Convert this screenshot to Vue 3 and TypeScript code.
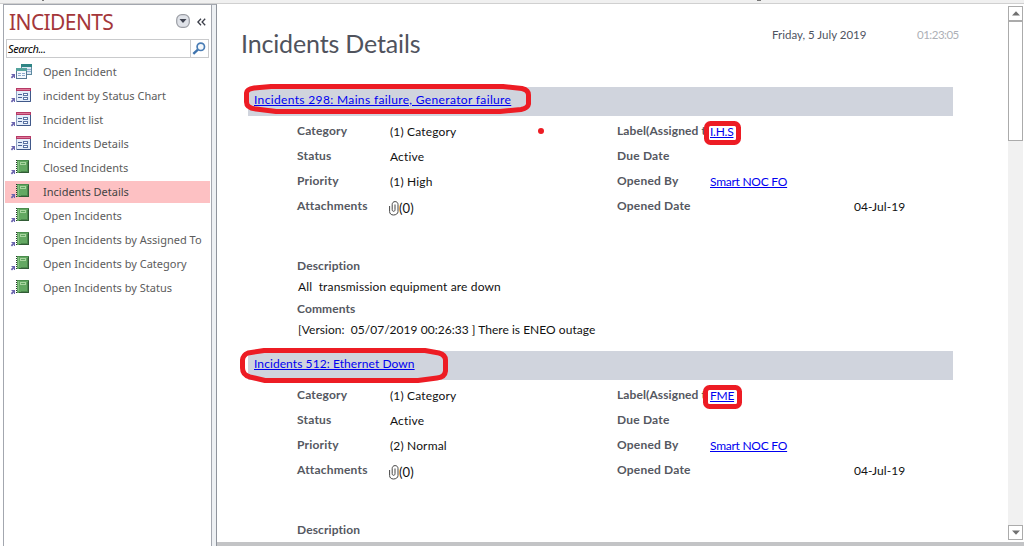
<script setup lang="ts">
type IconKind = 'table' | 'form' | 'report'

interface NavItem {
  label: string
  icon: IconKind
  active?: boolean
}

interface Incident {
  title: string
  kind: string
  priority: string
  assigned: string
  description?: string
  comments?: string
}

const navItems: NavItem[] = [
  { label: 'Open Incident', icon: 'table' },
  { label: 'incident by Status Chart', icon: 'form' },
  { label: 'Incident list', icon: 'form' },
  { label: 'Incidents Details', icon: 'form' },
  { label: 'Closed Incidents', icon: 'report' },
  { label: 'Incidents Details', icon: 'report', active: true },
  { label: 'Open Incidents', icon: 'report' },
  { label: 'Open Incidents by Assigned To', icon: 'report' },
  { label: 'Open Incidents by Category', icon: 'report' },
  { label: 'Open Incidents by Status', icon: 'report' },
]

const incidents: Incident[] = [
  {
    title: 'Incidents 298: Mains failure, Generator failure',
    kind: 'mains',
    priority: '(1) High',
    assigned: 'I.H.S',
    description: 'All  transmission equipment are down',
    comments: '[Version:  05/07/2019 00:26:33 ] There is ENEO outage',
  },
  {
    title: 'Incidents 512: Ethernet Down',
    kind: 'ethernet',
    priority: '(2) Normal',
    assigned: 'FME',
  },
]
</script>

<template>
  <div class="window">
    <div class="ribbon-edge"><i class="speck left"></i><i class="speck right"></i></div>
    <div class="workspace">
      <aside class="nav">
        <header class="nav-head">
          <h1>INCIDENTS</h1>
          <svg class="menu-btn" width="14" height="14" viewBox="0 0 14 14">
            <rect x=".7" y=".7" width="12.6" height="12.6" rx="5" fill="#dfe2e8" stroke="#9a9da4" stroke-width="1.2" />
            <path d="M3.5 5h7L7 9z" fill="#3f4350" />
          </svg>
          <svg class="collapse" width="9" height="8" viewBox="0 0 9 8">
            <path d="M4 .7.9 4 4 7.3M8.2.7 5.1 4l3.1 3.3" fill="none" stroke="#3c3f4a" stroke-width="1.3" />
          </svg>
        </header>
        <div class="search">
          <span>Search...</span>
          <div class="search-btn">
            <svg width="14" height="13" viewBox="0 0 14 13">
              <circle cx="8.8" cy="4.8" r="3.7" fill="#f4f8fc" stroke="#4a7db5" stroke-width="1.7" />
              <path d="M5.9 7.6 1.3 11.8" stroke="#3f74ae" stroke-width="2.4" />
            </svg>
          </div>
        </div>
        <ul>
          <li v-for="(item, i) in navItems" :key="i" :class="{ active: item.active }">
            <svg class="item-icon" width="22" height="17" viewBox="0 0 22 17">
              <path d="M1.500 11H5v4H4v-1.500L2 15.500.8 14.300 2.800 12H1.500z" fill="#6a64ae" />
              <g v-if="item.icon === 'table'">
                <rect x="11.500" y="1.500" width="10" height="10" fill="#dce8f3" stroke="#5f8ba0" />
                <path d="M11 1h11v3H11z" fill="#2f8585" />
                <path d="M17 6.500h4M17 8.500h4" stroke="#8fadd0" />
                <rect x="6.500" y="5.500" width="10" height="10" fill="#f4f8fc" stroke="#577794" />
                <path d="M6 5h11v3H6z" fill="#55a39d" />
                <path d="M8 10.500h3M12 10.500h3M8 12.500h3M12 12.500h3" stroke="#8fa9cd" />
              </g>
              <g v-else-if="item.icon === 'form'">
                <rect x="6.500" y="1.500" width="14" height="13" fill="#e4edfa" stroke="#8fa2c2" />
                <path d="M20.500 4v10.500H7" fill="none" stroke="#405889" />
                <path d="M6 1h15v3H6z" fill="#b63a66" />
                <path d="M7 2.500h13" stroke="#df7a9b" />
                <path d="M8 7.500h4M8 10.500h4" stroke="#4a6294" />
                <rect x="13.500" y="6.500" width="4" height="2" fill="#fff" stroke="#5a73a3" />
                <rect x="13.500" y="10.500" width="4" height="2" fill="#fff" stroke="#5a73a3" />
              </g>
              <g v-else>
                <path d="M7 1h12v13H7z" fill="#63a862" />
                <path d="M7 1h12v1H7z" fill="#4b8d4d" />
                <path d="M17 3h1v10h-7v-1h6z" fill="#4b874c" />
                <path d="M18 2h1v12H9v-1h9z" fill="#315c36" />
                <path d="M8 2h1v10H8z" fill="#86c083" />
                <rect x="10.500" y="3.500" width="5" height="2" fill="#5fa45f" stroke="#a9d5a0" />
                <path d="M6.500 1v13" stroke="#26352b" stroke-width="1" stroke-dasharray="1 1" />
              </g>
            </svg>
            <span>{{ item.label }}</span>
          </li>
        </ul>
      </aside>
      <div class="splitter"></div>
      <main>
        <section class="report">
          <header class="report-head">
            <h2>Incidents Details</h2>
            <span class="date">Friday, 5 July 2019</span>
            <span class="time">01:23:05</span>
          </header>
          <article v-for="inc in incidents" :key="inc.title">
            <div class="band"><a :class="inc.kind">{{ inc.title }}</a></div>
            <div class="fields">
              <b>Category</b><span>(1) Category</span>
              <b class="clip">Label(Assigned to)</b><a>{{ inc.assigned }}</a>
              <b>Status</b><span>Active</span>
              <b>Due Date</b><span></span>
              <b>Priority</b><span>{{ inc.priority }}</span>
              <b>Opened By</b><a>Smart NOC FO</a>
              <b>Attachments</b>
              <span class="attach">
                <svg width="10" height="15" viewBox="0 0 10 15">
                  <path d="M.6 5v5.500C.6 12.600 2 14 4.500 14S9 12.600 9 10.500V3.600C9 1.800 7.900.6 6.100.6S3.200 1.800 3.200 3.600v5.100c0 1 .5 1.600 1.400 1.600S6 9.700 6 8.700V3.500" fill="none" stroke="#454545" stroke-width="1" />
                </svg>(0)
              </span>
              <b>Opened Date</b><span class="opened">04-Jul-19</span>
            </div>
            <div class="notes">
              <b>Description</b>
              <p v-if="inc.description">{{ inc.description }}</p>
              <b v-if="inc.comments">Comments</b>
              <p v-if="inc.comments" class="version">{{ inc.comments }}</p>
            </div>
          </article>
        </section>
        <div class="scrollbar">
          <div class="arrow"><svg width="8" height="5" viewBox="0 0 8 5"><path d="M0 4.500 4 .3l4 4.200z" fill="#707070" /></svg></div>
          <div class="thumb"></div>
          <div class="arrow down"><svg width="8" height="5" viewBox="0 0 8 5"><path d="M0 .5h8L4 4.700z" fill="#707070" /></svg></div>
        </div>
      </main>
    </div>
    <svg class="marks" width="1024" height="546" viewBox="0 0 1024 546">
      <g fill="none" stroke="#ed1c24" stroke-width="5" stroke-linejoin="round">
        <path d="M254 88 271 86.500H503L522 88.500Q528.500 90 528.500 95V104Q528 108 521 109.500L500 111.500H276L256 109Q246.500 108 246.500 102V93Q247 89 254 88Z" />
        <path d="M248 353 264 350.500H425L439 353Q445.500 355 445.500 360V371Q445 377 437 378L418 380.500H265L250 377Q242.500 375 242.500 368V360Q243 355 248 353Z" />
        <rect x="706.500" y="123.500" width="32" height="19" rx="4" />
        <rect x="705.500" y="387.500" width="34" height="19" rx="4" />
      </g>
      <circle cx="541" cy="131" r="3" fill="#ed1c24" />
    </svg>
  </div>
</template>

<style>
html, body { margin: 0; overflow: hidden; }
</style>

<style scoped>
* { box-sizing: border-box; }
.window { position: relative; width: 1024px; height: 546px; overflow: hidden; display: flex; flex-direction: column; background: #fff; font-family: Lato, "Liberation Sans", sans-serif; font-size: 12px; color: #111; }
.ribbon-edge { position: relative; height: 4px; flex: none; background: #f0f0f0; border-bottom: 1px solid #d0d0d0; }
.speck { position: absolute; top: 0; height: 1px; background: #777; }
.speck.left { left: 42px; width: 2px; }
.speck.right { left: 757px; width: 4px; }
.workspace { flex: 1; display: flex; min-height: 0; padding-left: 3px; }
.nav { width: 209px; flex: none; border: solid #a3a7af; border-width: 1px 1px 0; font-family: "Noto Sans", "Open Sans", sans-serif; }
.nav-head { height: 34px; display: flex; align-items: flex-start; padding: 2px 5px 0 5px; }
h1 { margin: 0; width: 167px; font-size: 21px; line-height: 31px; font-weight: 400; color: #a4373a; letter-spacing: -.6px; }
.menu-btn { margin-top: 7px; }
.collapse { margin: 11px 0 0 7px; }
.search { height: 19px; margin: 0 2px; border: 1px solid #c9cacc; display: flex; font-style: italic; font-size: 11px; line-height: 17px; color: #000; letter-spacing: -.4px; }
.search span { flex: 1; padding-left: 1px; }
.search-btn { width: 18px; border-left: 1px solid #c9cacc; display: flex; padding: 2px 0 0 1px; }
ul { list-style: none; margin: 3px 0 0; padding: 0 1px; }
li { height: 22px; margin-bottom: 2px; display: flex; align-items: center; font-size: 11px; color: #5c5c5c; white-space: pre; padding-left: 5px; letter-spacing: 0; }
li.active { background: #fdc1c3; color: #444; }
li span { line-height: 16px; }
.item-icon { margin-right: 11px; margin-top: -1px; flex: none; }
.splitter { width: 5px; flex: none; background: #edf0f3; border-top: 1px solid #a3a7af; border-right: 1px solid #8f949c; }
main { flex: 1; display: flex; border-bottom: 4px solid #c3c4c6; }
.report { width: 791px; height: 538px; overflow: hidden; padding-left: 31px; }
.report-head { height: 83px; display: flex; margin-left: -7px; color: #4f545f; }
h2 { margin: 23px 0 0; width: 531px; font-size: 25px; line-height: 32px; font-weight: 400; letter-spacing: -.15px; color: #50535d; }
.date { width: 145px; margin-top: 23px; line-height: 16px; font-size: 11.5px; }
.time { margin-top: 23px; line-height: 16px; color: #adb0b6; font-size: 11.5px; letter-spacing: -.5px; }
article { height: 264px; }
.band { width: 705px; height: 29px; background: #d0d4dd; padding: 4px 6px; line-height: 17px; }
a { color: #0000f0; text-decoration: underline; white-space: pre; }
.mains { letter-spacing: .35px; }
.ethernet { letter-spacing: .08px; }
.fields { margin: 3px 0 0 49px; display: grid; grid-template-columns: 93px 227px 87px 210px; grid-template-rows: repeat(4, 25px); line-height: 25px; }
b { font-weight: 700; color: #555861; line-height: 24px; white-space: nowrap; letter-spacing: .2px; }
.fields span, .fields a { line-height: 26px; }
.fields span { letter-spacing: .15px; }
.fields a { padding-left: 6px; letter-spacing: -.25px; }
.clip { overflow: hidden; letter-spacing: .1px; }
.fields .attach { display: flex; align-items: center; font-size: 13px; margin-left: -1px; padding-top: 1px; height: 27px; }
.fields .opened { padding-left: 150px; white-space: nowrap; letter-spacing: .1px; }
.notes { margin: 37px 0 0 49px; display: flex; flex-direction: column; }
.notes b { height: 20px; line-height: 20px; letter-spacing: .1px; }
.notes p { margin: 0 0 0 1px; height: 23px; line-height: 22px; white-space: pre; letter-spacing: .15px; }
.notes .version { letter-spacing: .03px; }
.scrollbar { width: 16px; height: 534px; margin-top: 2px; padding-right: 1px; display: flex; flex-direction: column; background: #f1f1f1; background-clip: content-box; }
.arrow { height: 15px; flex: none; border: 1px solid #ababab; background: #fff; display: flex; align-items: center; justify-content: center; }
.thumb { height: 120px; border: 1px solid #ababab; background: #fff; }
.down { margin-top: auto; }
.marks { position: absolute; inset: 0; pointer-events: none; }
</style>
